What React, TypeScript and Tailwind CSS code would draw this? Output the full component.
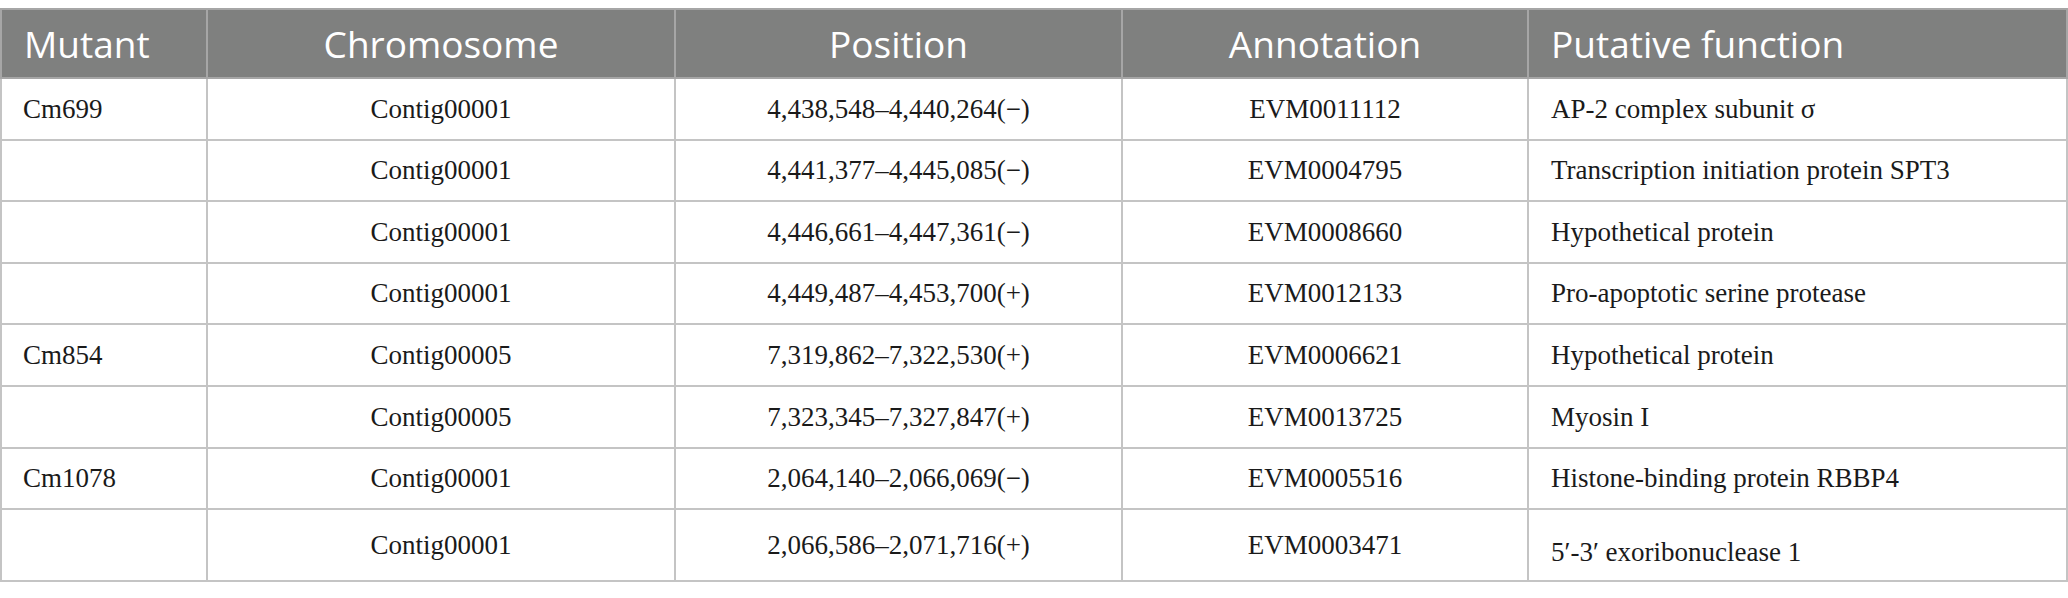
const rows = [
  ['Cm699', 'Contig00001', '4,438,548–4,440,264(−)', 'EVM0011112', 'AP-2 complex subunit σ'],
  ['', 'Contig00001', '4,441,377–4,445,085(−)', 'EVM0004795', 'Transcription initiation protein SPT3'],
  ['', 'Contig00001', '4,446,661–4,447,361(−)', 'EVM0008660', 'Hypothetical protein'],
  ['', 'Contig00001', '4,449,487–4,453,700(+)', 'EVM0012133', 'Pro-apoptotic serine protease'],
  ['Cm854', 'Contig00005', '7,319,862–7,322,530(+)', 'EVM0006621', 'Hypothetical protein'],
  ['', 'Contig00005', '7,323,345–7,327,847(+)', 'EVM0013725', 'Myosin I'],
  ['Cm1078', 'Contig00001', '2,064,140–2,066,069(−)', 'EVM0005516', 'Histone-binding protein RBBP4'],
  ['', 'Contig00001', '2,066,586–2,071,716(+)', 'EVM0003471', '5′-3′ exoribonuclease 1'],
]

export default function App() {
  return (
    <div className="w-[2068px] bg-white pt-2">
      <table className="w-full table-fixed border-collapse">
        <colgroup>
          <col className="w-[206px]" />
          <col className="w-[468px]" />
          <col className="w-[447px]" />
          <col className="w-[406px]" />
          <col />
        </colgroup>
        <thead>
          <tr className="h-[69px] bg-[#7f807f] text-white text-[37px] font-['Open_Sans',sans-serif]">
            <th className="border-2 border-[#a6a6a6] pl-[22px] text-left font-normal">Mutant</th>
            <th className="border-2 border-[#a6a6a6] text-center font-normal">Chromosome</th>
            <th className="border-2 border-[#a6a6a6] text-center font-normal">Position</th>
            <th className="border-2 border-[#a6a6a6] text-center font-normal">Annotation</th>
            <th className="border-2 border-[#a6a6a6] pl-[22px] text-left font-normal">Putative function</th>
          </tr>
        </thead>
        <tbody className="text-[27px] text-[#1a1a1a] font-['Liberation_Serif',serif]">
          {rows.map((r, i) => {
            const last = i === rows.length - 1
            return (
              <tr key={i} className={last ? 'h-[72px]' : 'h-[61.6px]'}>
                <td className="border-2 border-[#c4c4c4] pl-[21px] text-left">{r[0]}</td>
                <td className="border-2 border-[#c4c4c4] text-center">{r[1]}</td>
                <td className="border-2 border-[#c4c4c4] text-center">{r[2]}</td>
                <td className="border-2 border-[#c4c4c4] text-center">{r[3]}</td>
                <td className={`border-2 border-[#c4c4c4] pl-[22px] text-left ${last ? 'pt-[14px]' : ''}`}>{r[4]}</td>
              </tr>
            )
          })}
        </tbody>
      </table>
    </div>
  )
}
